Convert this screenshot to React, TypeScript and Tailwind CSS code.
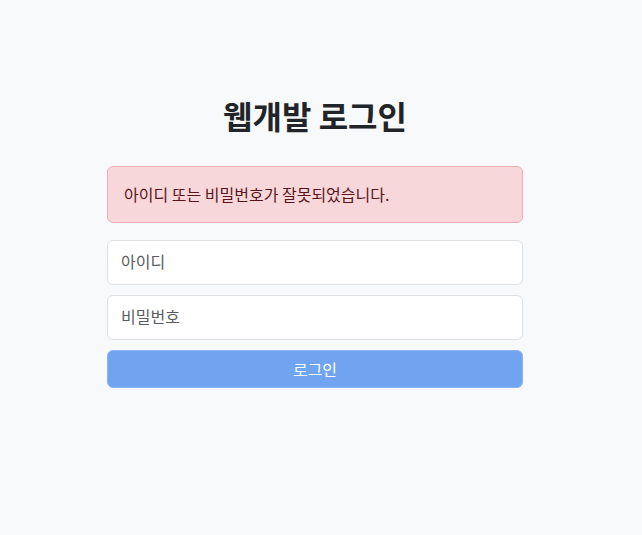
export default function App() {
  return (
    <div
      className="min-h-[535px] w-full bg-[#f8f9fa] pt-[96px]"
      style={{ fontFamily: '"Noto Sans CJK KR", "Noto Sans", sans-serif' }}
    >
      <div className="ml-[107px] w-[416px]">
        <h2 className="mb-[32px] text-center text-[32px] font-bold leading-[38px] text-[#212529]">
          웹개발 로그인
        </h2>
        <div className="mb-[17px] rounded-[6px] border border-[#f1aeb5] bg-[#f8d7da] px-[16px] py-[15px] text-[16px] leading-[25px] text-[#58151c]">
          아이디 또는 비밀번호가 잘못되었습니다.
        </div>
        <form className="flex flex-col gap-[10px]" onSubmit={(e) => e.preventDefault()}>
          <input
            className="h-[45px] w-full rounded-[6px] border border-[#dee2e6] bg-white px-[13px] pb-[4px] text-[16px] text-[#212529] outline-none placeholder:text-[#595c5f]"
            placeholder="아이디"
          />
          <input
            type="password"
            className="h-[45px] w-full rounded-[6px] border border-[#dee2e6] bg-white px-[13px] pb-[4px] text-[16px] text-[#212529] outline-none placeholder:text-[#595c5f]"
            placeholder="비밀번호"
          />
          <button
            type="submit"
            className="h-[38px] w-full rounded-[6px] border border-[#8db5f3] bg-[#70a3f0] text-[16px] text-white"
          >
            로그인
          </button>
        </form>
      </div>
    </div>
  );
}
